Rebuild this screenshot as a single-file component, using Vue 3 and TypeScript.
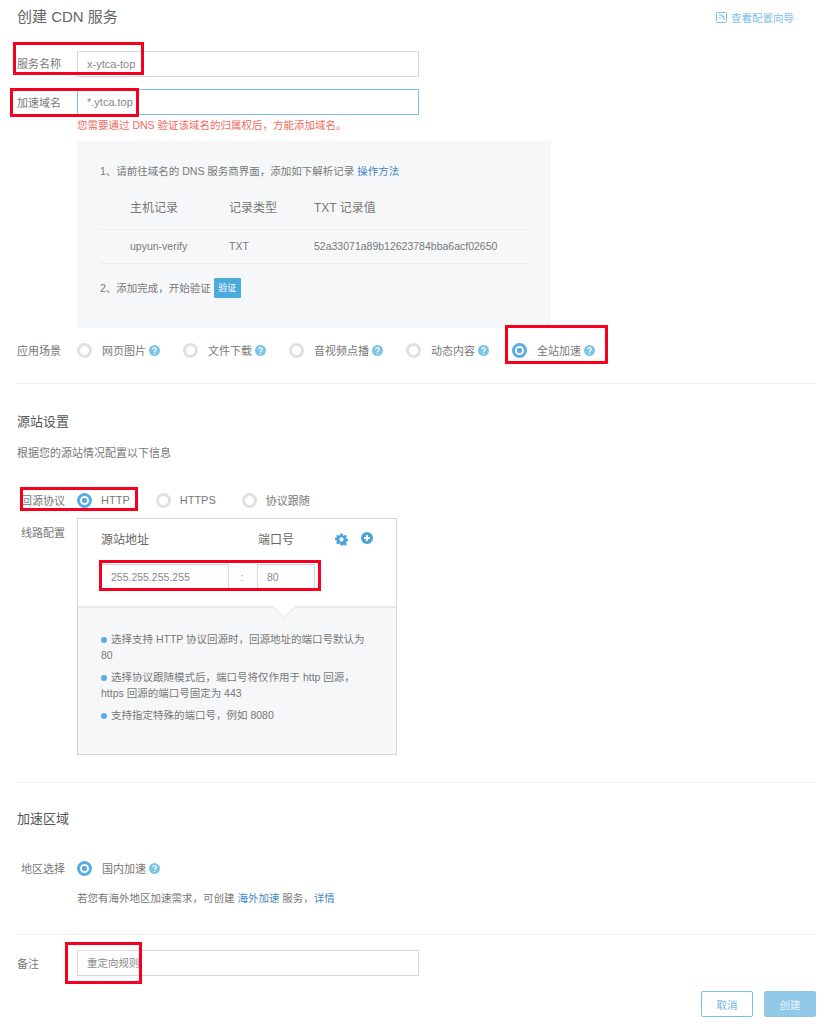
<script setup lang="ts">
interface Opt { label: string; on?: boolean; help?: boolean }
const scenes: Opt[] = [
  { label: '网页图片', help: true },
  { label: '文件下载', help: true },
  { label: '音视频点播', help: true },
  { label: '动态内容', help: true },
  { label: '全站加速', help: true, on: true },
]
const protocols: Opt[] = [
  { label: 'HTTP', on: true },
  { label: 'HTTPS' },
  { label: '协议跟随' },
]
</script>

<template>
  <div class="page">
    <header class="top">
      <h1 class="title">创建 CDN 服务</h1>
      <a class="guide">
        <svg width="11" height="11" viewBox="0 0 11 11" fill="none" stroke="#7cc0e8" stroke-width="1">
          <rect x="0.5" y="0.5" width="10" height="10" rx="1" />
          <path d="M3 3h3l2 2v3M6 3v2h2M3 6h2" />
        </svg>
        查看配置向导
      </a>
    </header>

    <div class="field f-name">
      <label class="lab">服务名称</label>
      <div class="input wide">x-ytca-top</div>
      <i class="mark m1"></i>
    </div>
    <div class="field f-domain">
      <label class="lab">加速域名</label>
      <div class="input wide focus">*.ytca.top</div>
      <i class="mark m2"></i>
    </div>
    <p class="err">您需要通过 DNS 验证该域名的归属权后，方能添加域名。</p>

    <section class="dns">
      <p class="step s1">1、请前往域名的 DNS 服务商界面，添加如下解析记录 <a class="link">操作方法</a></p>
      <div class="row-t head"><span class="c1">主机记录</span><span class="c2">记录类型</span><span class="c3">TXT 记录值</span></div>
      <div class="row-t body"><span class="c1">upyun-verify</span><span class="c2">TXT</span><span class="c3">52a33071a89b12623784bba6acf02650</span></div>
      <p class="step s2">2、添加完成，开始验证 <button class="verify">验证</button></p>
    </section>

    <div class="scene">
      <span class="lab">应用场景</span>
      <div class="opts">
        <span v-for="o in scenes" :key="o.label" class="opt">
          <i class="radio" :class="{ on: o.on }"></i>
          <span class="opt-t">{{ o.label }}</span>
          <svg v-if="o.help" class="help" viewBox="0 0 11 11"><circle cx="5.5" cy="5.5" r="5.5" fill="#7cc5e8" /><path d="M3.7 4.3a1.8 1.6 0 1 1 2.7 1.4c-.6.4-.9.6-.9 1.2" fill="none" stroke="#fff" stroke-width="1.2" /><circle cx="5.5" cy="8.4" r=".75" fill="#fff" /></svg>
        </span>
      </div>
      <i class="mark m3"></i>
    </div>

    <hr class="rule r1" />
    <h2 class="sec s-origin">源站设置</h2>
    <p class="desc">根据您的源站情况配置以下信息</p>

    <div class="proto">
      <span class="lab in">回源协议</span>
      <div class="popts">
        <span v-for="o in protocols" :key="o.label" class="popt">
          <i class="radio" :class="{ on: o.on }"></i>
          <span class="popt-t">{{ o.label }}</span>
        </span>
      </div>
      <i class="mark m4"></i>
    </div>

    <div class="lines">
      <span class="lab in">线路配置</span>
      <div class="panel">
        <div class="p-top">
          <div class="p-head">
            <span class="ph1">源站地址</span>
            <span class="ph2">端口号</span>
            <svg class="gear" width="13" height="13" viewBox="0 0 24 24"><path fill="#4ba3d8" fill-rule="evenodd" d="M10 1h4l.6 3.2 2 .8L19.300 3.200l2.800 2.800-1.800 2.700.8 2 3.200.6v4l-3.200.6-.8 2 1.800 2.700-2.800 2.800-2.700-1.800-2 .8L14 23.200h-4l-.6-3.200-2-.8-2.700 1.800-2.800-2.800 1.800-2.700-.8-2-3.200-.6v-4l3.200-.6.8-2L1.900 6l2.800-2.800 2.700 1.800 2-.8zM12 8a4 4 0 1 0 0 8 4 4 0 0 0 0-8z" /></svg>
            <svg class="plus" width="12" height="12" viewBox="0 0 12 12"><circle cx="6" cy="6" r="6" fill="#4ba3d8" /><path d="M3 6h6M6 3v6" stroke="#fff" stroke-width="2" /></svg>
          </div>
          <div class="p-inputs">
            <div class="input addr">255.255.255.255</div>
            <span class="colon">:</span>
            <div class="input port">80</div>
            <i class="mark m5"></i>
          </div>
        </div>
        <div class="p-tips">
          <span class="notch"></span>
          <p class="tip"><i class="dot"></i>选择支持 HTTP 协议回源时，回源地址的端口号默认为 80</p>
          <p class="tip"><i class="dot"></i>选择协议跟随模式后，端口号将仅作用于 http 回源，https 回源的端口号固定为 443</p>
          <p class="tip"><i class="dot"></i>支持指定特殊的端口号，例如 8080</p>
        </div>
      </div>
    </div>

    <hr class="rule r2" />
    <h2 class="sec s-area">加速区域</h2>

    <div class="area">
      <span class="lab in">地区选择</span>
      <span class="opt">
        <i class="radio on"></i>
        <span class="opt-t">国内加速</span>
        <svg class="help" viewBox="0 0 11 11"><circle cx="5.500" cy="5.500" r="5.500" fill="#7cc5e8" /><path d="M3.700 4.300a1.800 1.600 0 1 1 2.700 1.400c-.6.4-.9.6-.9 1.200" fill="none" stroke="#fff" stroke-width="1.200" /><circle cx="5.500" cy="8.400" r=".75" fill="#fff" /></svg>
      </span>
    </div>
    <p class="note">若您有海外地区加速需求，可创建 <a class="link">海外加速</a> 服务，<a class="link">详情</a></p>

    <hr class="rule r3" />
    <div class="field f-memo">
      <label class="lab">备注</label>
      <div class="input wide memo">重定向规则</div>
      <i class="mark m6"></i>
    </div>

    <footer class="actions">
      <button class="btn ghost">取消</button>
      <button class="btn solid">创建</button>
    </footer>
  </div>
</template>

<style scoped>
.page {
  width: 800px;
  height: 1024px;
  padding-left: 16px;
  overflow: hidden;
  font-family: "Liberation Sans", "Noto Sans CJK SC", sans-serif;
  color: #777;
  font-size: 10.5px;
  background: #fff;
}
p, h1, h2 { margin: 0; font-weight: 400; }
.top { box-sizing: border-box; height: 34px; padding-bottom: 4px; display: flex; justify-content: space-between; align-items: center; }
.title { font-size: 15px; color: #666; padding-left: 1px; }
.guide { display: flex; align-items: center; gap: 4px; font-size: 10.500px; color: #7cc0e8; margin-right: 22px; padding-top: 4px; }
.field { position: relative; display: flex; align-items: center; }
.f-name { margin-top: 17px; }
.f-name .lab { margin-top: -2px; }
.f-domain { margin-top: 12px; }
.lab { box-sizing: border-box; width: 61px; padding-left: 1px; flex: none; font-size: 11px; color: #777; }
.lab.in { padding-left: 5px; width: 61px; }
.input {
  box-sizing: border-box;
  height: 26px;
  border: 1px solid #d9d9d9;
  line-height: 24px;
  padding-left: 9px;
  color: #888;
  font-size: 11px;
}
.wide { width: 342px; }
.focus { border-color: #7fc0e4; }
.err { margin: 3px 0 0 61px; height: 14px; line-height: 14px; color: #ef6a5f; }
.dns {
  box-sizing: border-box;
  margin: 9px 0 0 61px;
  width: 474px;
  height: 187px;
  padding: 0 23px 0 23px;
  background: #f6f7f9;
  overflow: hidden;
}
.step { line-height: 16px; }
.s1 { margin-top: 22px; }
.link { color: #3f86c4; }
.row-t { display: flex; align-items: center; padding-left: 30px; box-sizing: border-box; }
.head { height: 41px; margin-top: 10px; font-size: 12px; border-bottom: 1px solid #ebecef; padding-bottom: 5px; }
.body { height: 34px; border-bottom: 1px solid #ebecef; padding-bottom: 2px; }
.c1 { width: 99px; }
.c2 { width: 85px; }
.s2 { margin-top: 14px; display: flex; align-items: center; gap: 3px; height: 20px; }
.verify {
  width: 27px; height: 20px; padding: 0; border: 0; border-radius: 1px;
  background: #4ca9dc; color: #fff; font: inherit; font-size: 9px;
}
.scene { position: relative; display: flex; align-items: center; margin-top: 14px; height: 16px; }
.opts { display: flex; gap: 23px; }
.opt { display: inline-flex; align-items: center; }
.radio {
  box-sizing: border-box;
  flex: none;
  display: block;
  width: 15px; height: 15px;
  border-radius: 50%;
  border: 3px solid #dfe1e5;
  background: #fff;
  margin-right: 10px;
}
.radio.on {
  border-color: #5aace3;
  background: radial-gradient(circle, #5aace3 0 2.500px, #fff 3px);
}
.opt-t { font-size: 11px; }
.help { width: 11px; height: 11px; margin-left: 3px; }
.rule { border: 0; height: 1px; width: 800px; margin: 0; background: #eeeff1; }
.r1 { margin-top: 25px; }
.sec { font-size: 13px; color: #555; height: 18px; line-height: 18px; padding-left: 1px; }
.s-origin { margin-top: 29px; }
.desc { margin-top: 14px; line-height: 16px; font-size: 11px; padding-left: 1px; }
.proto { position: relative; display: flex; align-items: center; height: 18px; margin-top: 30px; }
.popts { display: flex; }
.popt { display: inline-flex; align-items: center; margin-right: 26px; }
.popt .radio { margin-right: 9px; }
.popt-t { font-size: 11px; }
.lines { display: flex; align-items: flex-start; margin-top: 9px; }
.lines .lab { padding-top: 6px; }
.panel { box-sizing: border-box; width: 320px; height: 237px; border: 1px solid #d5d6d9; }
.p-top { height: 87px; box-sizing: border-box; padding: 10px 0 0 23px; }
.p-head { display: flex; align-items: center; height: 18px; font-size: 12px; color: #666; position: relative; }
.ph1 { width: 157px; }
.ph2 { width: 78px; }
.gear { margin-right: 13px; margin-left: -1px; margin-top: 2px; }
.plus { margin-top: -1px; }
.p-inputs { position: relative; display: flex; align-items: center; margin-top: 17px; }
.addr { width: 128px; height: 25px; border-bottom: 0; font-size: 10.500px; }
.port { width: 58px; height: 25px; border-bottom: 0; font-size: 10.500px; }
.colon { width: 28px; text-align: center; color: #999; padding-right: 2px; box-sizing: border-box; }
.p-tips {
  position: relative;
  box-sizing: border-box;
  height: 148px;
  padding: 24px 24px 0 23px;
  background: #f6f7f9;
  border-top: 2px solid #e8e9eb;
}
.notch {
  position: absolute;
  top: -10px; left: 198px;
  width: 17px; height: 17px;
  background: #fff;
  transform: rotate(45deg);
  border-right: 1px solid #e8e9eb;
  border-bottom: 1px solid #e8e9eb;
  box-sizing: border-box;
}
.tip { line-height: 15.500px; margin-bottom: 7px; }
.dot { display: inline-block; width: 6px; height: 6px; border-radius: 50%; background: #5aace3; margin-right: 4px; vertical-align: 0; }
.r2 { margin-top: 27px; }
.s-area { margin-top: 27px; }
.area { display: flex; align-items: center; height: 16px; margin-top: 32px; }
.note { margin: 14px 0 0 61px; line-height: 16px; }
.r3 { margin-top: 28px; }
.f-memo { margin-top: 15px; }
.memo { font-size: 10.500px; }
.actions { display: flex; justify-content: flex-end; gap: 11px; margin-top: 15px; }
.btn { width: 52px; height: 26px; padding: 0; border-radius: 2px; font: inherit; font-size: 10.500px; }
.ghost { background: #fff; border: 1px solid #7cc0e8; color: #6cb6e2; }
.solid { background: #93c9e8; border: 0; color: #e4f2fa; }
.mark { position: absolute; box-sizing: border-box; border: 3px solid #f5001f; pointer-events: none; display: block; }
.m1 { left: -3px; top: -9px; width: 131px; height: 33px; }
.m2 { left: -6px; top: -1px; width: 129px; height: 29px; }
.m3 { left: 489px; top: -17px; width: 103px; height: 39px; }
.m4 { left: 4px; top: -4px; width: 118px; height: 24px; }
.m5 { left: -2px; top: -4px; width: 222px; height: 31px; }
.m6 { left: 49px; top: -8px; width: 77px; height: 42px; }
</style>
